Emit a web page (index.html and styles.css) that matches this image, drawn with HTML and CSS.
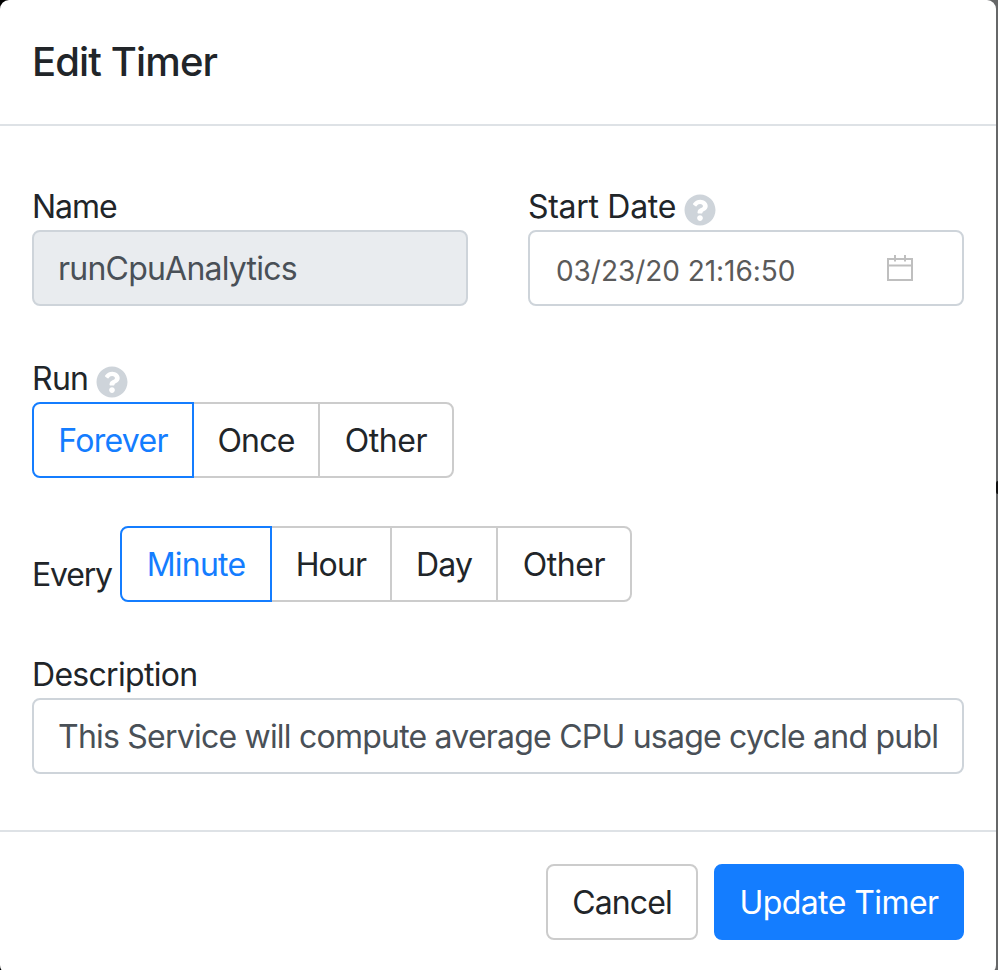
FILE: index.html
```html
<!DOCTYPE html>
<html lang="en">
<head>
<meta charset="utf-8">
<title>Edit Timer</title>
<link rel="stylesheet" href="styles.css">
</head>
<body>
<main class="modal">
  <header class="header"><h1>Edit Timer</h1></header>
  <form class="body">
    <div class="row">
      <div class="field">
        <label class="label name-text"><span class="t">Name</span></label>
        <div class="input disabled"><span class="t">runCpuAnalytics</span></div>
      </div>
      <div class="field">
        <label class="label start-text"><span class="t">Start Date</span>
          <svg class="help" viewBox="0 0 512 512"><path d="M504 256c0 137-111 248-248 248S8 393 8 256 119 8 256 8s248 111 248 248zM262.700 90c-54.500 0-89.300 23-116.500 63.800-3.500 5.300-2.400 12.400 2.700 16.300l34.700 26.300c5.200 3.900 12.600 3 16.700-2.100 17.900-22.700 30.100-35.800 57.300-35.800 20.400 0 45.700 13.100 45.700 33 0 15-12.400 22.700-32.500 34C247.100 238.500 216 254.900 216 296v4c0 6.600 5.400 12 12 12h56c6.600 0 12-5.400 12-12v-1.300c0-28.500 83.200-29.600 83.200-106.700 0-58-60.200-102-116.500-102zM256 338c-25.400 0-46 20.600-46 46s20.600 46 46 46 46-20.600 46-46-20.600-46-46-46z"/></svg>
        </label>
        <div class="input date"><span class="t">03/23/20 21:16:50</span>
          <svg class="calendar" viewBox="0 0 26 26"><path d="M1 4h24v21H1zM1 10.500h24M8 0v6.500M18 0v6.500"/></svg>
        </div>
      </div>
    </div>
    <div class="run">
      <label class="label"><span class="t">Run</span>
        <svg class="help" viewBox="0 0 512 512"><path d="M504 256c0 137-111 248-248 248S8 393 8 256 119 8 256 8s248 111 248 248zM262.700 90c-54.500 0-89.300 23-116.500 63.800-3.500 5.300-2.400 12.400 2.700 16.300l34.700 26.300c5.200 3.900 12.600 3 16.700-2.100 17.900-22.700 30.100-35.800 57.300-35.800 20.400 0 45.700 13.100 45.700 33 0 15-12.400 22.700-32.500 34C247.100 238.500 216 254.900 216 296v4c0 6.600 5.400 12 12 12h56c6.600 0 12-5.400 12-12v-1.300c0-28.500 83.200-29.600 83.200-106.700 0-58-60.200-102-116.500-102zM256 338c-25.400 0-46 20.600-46 46s20.600 46 46 46 46-20.600 46-46-20.600-46-46-46z"/></svg>
      </label>
      <div class="group">
        <button type="button" class="option selected forever">Forever</button><button type="button" class="option once">Once</button><button type="button" class="option other">Other</button>
      </div>
    </div>
    <div class="every">
      <span class="every-label">Every</span>
      <div class="group">
        <button type="button" class="option selected minute">Minute</button><button type="button" class="option hour">Hour</button><button type="button" class="option day">Day</button><button type="button" class="option other">Other</button>
      </div>
    </div>
    <div class="description">
      <label class="label"><span class="t">Description</span></label>
      <div class="input"><span class="t">This Service will compute average CPU usage cycle and publ</span></div>
    </div>
  </form>
  <footer class="footer">
    <button type="button" class="button cancel">Cancel</button>
    <button type="button" class="button primary">Update Timer</button>
  </footer>
</main>
<span class="backdrop-mark"></span>
</body>
</html>
```
FILE: styles.css
```css
* { box-sizing: border-box; }
body { margin: 0; height: 970px; background: linear-gradient(90deg, #000 50%, #666768 50%); color: #212529; font: 32px/48px Inter, sans-serif; overflow: hidden; }
.modal { width: 996px; height: 974px; background: #fff; border-radius: 9px; }
.header { height: 126px; padding: 32px; border-bottom: 2px solid #dee2e6; }
h1 { margin: 0; font-size: 40px; line-height: 60px; font-weight: 500; letter-spacing: -.87px; white-space: nowrap; }
.t { white-space: nowrap; padding-top: 2px; }
.body { height: 704px; padding: 56px 32px 0; }
.row { display: grid; grid-template-columns: 436px 436px; gap: 60px; }
.label { display: flex; align-items: center; height: 48px; gap: 8px; letter-spacing: -.7px; }
.name-text { letter-spacing: -1px; }
.start-text { letter-spacing: -.3px; }
.help { width: 32px; height: 32px; fill: #ced4da; margin-top: 7px; }
.input { height: 76px; border: 2px solid #ced4da; border-radius: 8px; padding: 13px 24px 11px; color: #495057; overflow: hidden; letter-spacing: -.78px; }
.disabled { background: #e9ecef; }
.date { display: flex; justify-content: space-between; padding-right: 49px; padding-left: 26px; font-size: 28px; color: #5a5a5a; letter-spacing: -.05px; }
.calendar { width: 26px; height: 26px; margin-top: 10px; fill: none; stroke: #bfbfbf; stroke-width: 2; }
.run { margin-top: 48px; }
.group { display: flex; }
button { font: inherit; }
.option { height: 76px; margin: 0 0 0 -2px; padding: 2px 0 0; border: 2px solid #ccc; background: #fff; color: #212529; letter-spacing: -.8px; }
.option:first-child { margin: 0; border-radius: 8px 0 0 8px; }
.option:last-child { border-radius: 0 8px 8px 0; }
.selected { color: #147dff; border-color: #147dff; position: relative; }
.forever { width: 162px; letter-spacing: -.7px; }
.once { width: 128px; }
.option.other { width: 136px; letter-spacing: -.4px; }
.minute { width: 152px; }
.hour { width: 122px; }
.day { width: 108px; }
.every { display: flex; margin-top: 48px; }
.every-label { width: 88px; padding-top: 25px; letter-spacing: -1.2px; }
.description { margin-top: 48px; }
.footer { height: 144px; border-top: 2px solid #dee2e6; padding: 32px 32px 34px; display: flex; justify-content: flex-end; gap: 16px; }
.button { height: 76px; padding: 2px 0 0; border-radius: 8px; }
.cancel { width: 152px; border: 2px solid #ccc; background: #fff; color: #212529; letter-spacing: -.9px; }
.primary { width: 250px; border: 2px solid #147dff; background: #147dff; color: #fff; letter-spacing: -.56px; }
.backdrop-mark { position: absolute; right: 0; top: 481px; width: 2px; height: 13px; background: #111; border-radius: 2px 0 0 2px; }
```
